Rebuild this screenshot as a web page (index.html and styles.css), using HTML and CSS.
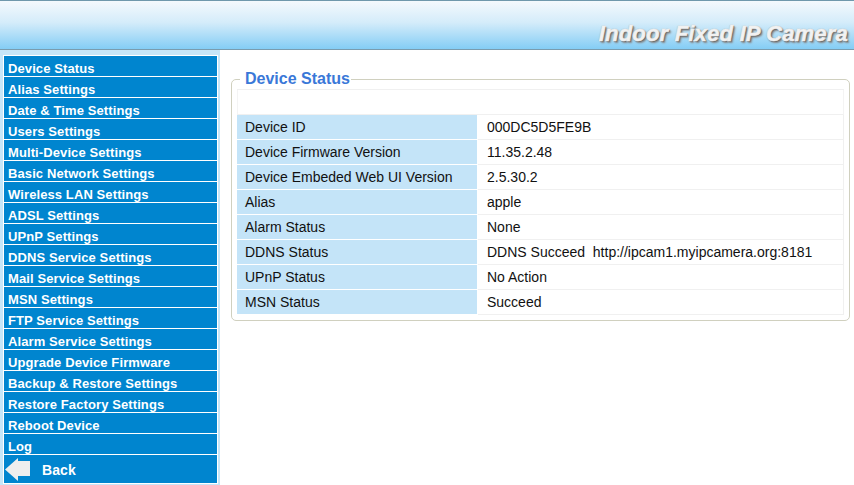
FILE: index.html
```html
<!DOCTYPE html>
<html>
<head>
<meta charset="utf-8">
<link rel="stylesheet" href="styles.css">
</head>
<body>
<div class="header"><span class="title">Indoor Fixed IP Camera</span></div>
<div class="body">
  <div class="sidebar">
    <ul class="menu">
      <li>Device Status</li>
      <li>Alias Settings</li>
      <li>Date &amp; Time Settings</li>
      <li>Users Settings</li>
      <li>Multi-Device Settings</li>
      <li>Basic Network Settings</li>
      <li>Wireless LAN Settings</li>
      <li>ADSL Settings</li>
      <li>UPnP Settings</li>
      <li>DDNS Service Settings</li>
      <li>Mail Service Settings</li>
      <li>MSN Settings</li>
      <li>FTP Service Settings</li>
      <li>Alarm Service Settings</li>
      <li>Upgrade Device Firmware</li>
      <li>Backup &amp; Restore Settings</li>
      <li>Restore Factory Settings</li>
      <li>Reboot Device</li>
      <li>Log</li>
      <li class="back"><svg class="arrow" width="26" height="24" viewBox="0 0 26 24"><path d="M0 11.5 L13 0 L13 3 L25 3 L25 18 L13 18 L13 23 Z" fill="#eeeeee"/></svg><span>Back</span></li>
    </ul>
  </div>
  <div class="main">
    <fieldset class="panel">
      <legend>Device Status</legend>
      <table class="status">
        <tr class="empty"><td colspan="2"></td></tr>
        <tr><td class="k">Device ID</td><td class="v">000DC5D5FE9B</td></tr>
        <tr><td class="k">Device Firmware Version</td><td class="v">11.35.2.48</td></tr>
        <tr><td class="k">Device Embeded Web UI Version</td><td class="v">2.5.30.2</td></tr>
        <tr><td class="k">Alias</td><td class="v">apple</td></tr>
        <tr><td class="k">Alarm Status</td><td class="v">None</td></tr>
        <tr><td class="k">DDNS Status</td><td class="v">DDNS Succeed&nbsp;&nbsp;http://ipcam1.myipcamera.org:8181</td></tr>
        <tr><td class="k">UPnP Status</td><td class="v">No Action</td></tr>
        <tr><td class="k">MSN Status</td><td class="v">Succeed</td></tr>
      </table>
    </fieldset>
  </div>
</div>
</body>
</html>
```
FILE: styles.css
```css
html, body {
  margin: 0;
  padding: 0;
}
body {
  width: 854px;
  height: 485px;
  overflow: hidden;
  font-family: "Liberation Sans", Arial, sans-serif;
  background: #ffffff;
}
.header {
  height: 48px;
  border-top: 1px solid #6f98ac;
  border-bottom: 1px solid #7a9cae;
  background: linear-gradient(to bottom, #f4f9fd 0%, #d4ecfa 45%, #84cdf5 100%);
  display: flex;
  justify-content: flex-end;
  align-items: flex-start;
}
.title {
  margin-top: 20px;
  margin-right: 6px;
  font-family: "Liberation Sans", Arial, sans-serif;
  font-weight: bold;
  font-style: italic;
  font-size: 22px;
  line-height: 26px;
  letter-spacing: 0.2px;
  color: #f2f2f2;
  -webkit-text-stroke: 0.6px #f0f0f0;
  text-shadow: 0 0 1px #777, 1px 1px 1px #666, 2px 2px 2px #888;
}
.body {
  display: flex;
  height: 435px;
}
.sidebar {
  width: 220px;
  background: #c6e6f8;
  padding-top: 5px;
  box-sizing: border-box;
}
.menu {
  list-style: none;
  margin: 0 0 0 3px;
  padding: 0;
  width: 215px;
}
.menu li {
  height: 20px;
  line-height: 25px;
  background: #0085cf;
  border: 1px solid #ffffff;
  border-bottom: none;
  color: #ffffff;
  font-weight: bold;
  font-size: 13px;
  padding-left: 4px;
  box-sizing: content-box;
  letter-spacing: 0.1px;
  overflow: visible;
}
.menu li.back {
  height: 28px;
  line-height: 28px;
  border-bottom: 1px solid #ffffff;
  display: flex;
  align-items: center;
  padding-left: 1px;
  font-size: 14px;
}
.arrow {
  display: block;
  margin-right: 11px;
  margin-top: 1px;
}
.back span {
  line-height: 28px;
  padding-top: 2px;
}
.main {
  flex: 1;
  background: #ffffff;
  padding: 20px 4px 0 11px;
}
.panel {
  margin: 0;
  padding: 0 5px 5px 5px;
  border: 1px solid #d0d0bf;
  border-radius: 5px;
  min-width: 0;
}
.panel legend {
  margin-left: 3px;
  padding: 0 1px 0 5px;
  color: #3a78d8;
  font-weight: bold;
  font-size: 16px;
  line-height: 18px;
}
.status {
  width: 100%;
  border-collapse: separate;
  border-spacing: 0;
  border-top: 1px solid #f0f0f0;
  margin-top: 1px;
  font-size: 14px;
  color: #111111;
}
.status td {
  height: 24px;
  padding: 0;
  border-bottom: 1px solid #ffffff;
}
.status tr.empty td {
  border-bottom: 1px solid #f0f0f0;
  border-left: 1px solid #f4f4f4;
  border-right: 1px solid #f4f4f4;
}
.status td.k {
  width: 241px;
  background: #c4e4f8;
  padding-left: 8px;
  box-sizing: border-box;
  border-right: 1px solid #ffffff;
}
.status td.v {
  padding-left: 9px;
  border-bottom: 1px solid #f0f0f0;
  border-right: 1px solid #f0f0f0;
}
```
